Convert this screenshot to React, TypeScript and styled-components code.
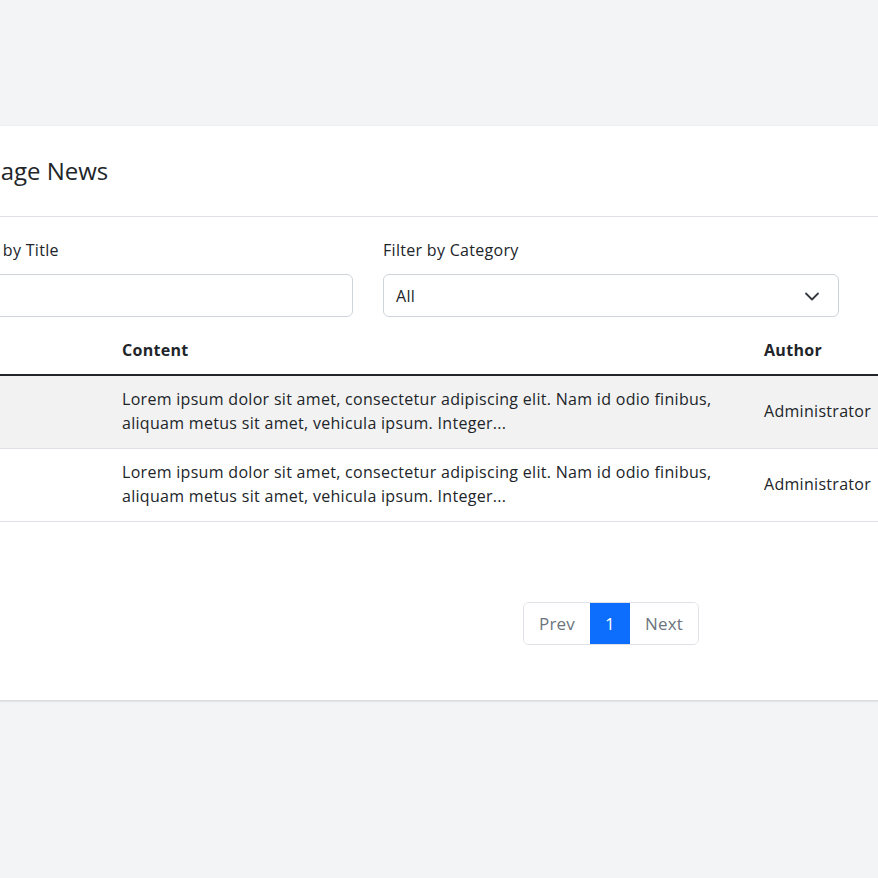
import React from "react";
import styled, { createGlobalStyle } from "styled-components";

const Global = createGlobalStyle`
  html, body {
    margin: 0;
    padding: 0;
    background: #f3f4f6;
    overflow: hidden;
  }
  body {
    font-family: "Open Sans", "Noto Sans", sans-serif;
    color: #212529;
    font-size: 16px;
    line-height: 1.5;
    letter-spacing: 0.3px;
  }
  * { box-sizing: border-box; }
`;

const Page = styled.div`
  padding-top: 126px;
  width: 878px;
  height: 878px;
`;

const Card = styled.section`
  margin-left: -65px;
  width: 1352px;
  background: #ffffff;
  box-shadow: 0 1px 3px rgba(0, 0, 0, 0.1), 0 1px 2px rgba(0, 0, 0, 0.06);
`;

const CardHeader = styled.header`
  height: 91px;
  padding: 0 16px;
  display: flex;
  align-items: center;
  border-bottom: 1px solid #dee2e6;
`;

const Title = styled.h2`
  margin: 0;
  font-size: 24px;
  font-weight: 500;
  line-height: 1.2;
  letter-spacing: 0;
  color: #212529;
`;

const CardBody = styled.div`
  padding: 21px 24px 55px;
`;

const Filters = styled.div`
  display: grid;
  grid-template-columns: 394px 456px;
  column-gap: 30px;
`;

const Field = styled.div`
  display: flex;
  flex-direction: column;
`;

const Label = styled.label`
  font-size: 16px;
  line-height: 24px;
  margin-bottom: 12px;
`;

const Input = styled.input`
  height: 43px;
  border: 1px solid #ced4da;
  border-radius: 6px;
  padding: 0 12px;
  font: inherit;
  color: #212529;
  background: #fff;
`;

const SelectBox = styled.div`
  height: 43px;
  border: 1px solid #ced4da;
  border-radius: 6px;
  padding: 0 18px 0 12px;
  display: flex;
  align-items: center;
  justify-content: space-between;
  background: #fff;
`;

const Table = styled.table`
  margin-top: 12px;
  width: 100%;
  border-collapse: collapse;
  table-layout: fixed;
`;

const Th = styled.th`
  text-align: left;
  font-weight: 700;
  padding: 9px 8px 12px;
  line-height: 24px;
  border-bottom: 2px solid #212529;
`;

const Row = styled.tr<{ $striped?: boolean }>`
  background: ${(p) => (p.$striped ? "#f2f2f2" : "#ffffff")};
`;

const Td = styled.td`
  padding: 11px 8px 13px;
  line-height: 24px;
  vertical-align: middle;
  border-bottom: 1px solid #dee2e6;
`;

const PagerWrap = styled.div`
  margin-top: 80px;
  display: flex;
  justify-content: center;
`;

const Pager = styled.ul`
  list-style: none;
  margin: 0;
  padding: 0;
  display: flex;
  border: 1px solid #dee2e6;
  border-radius: 6px;
  overflow: hidden;
`;

const PageItem = styled.li<{ $active?: boolean }>`
  height: 41px;
  padding: 0 15px;
  display: flex;
  align-items: center;
  font-size: 17px;
  letter-spacing: 0.2px;
  color: ${(p) => (p.$active ? "#ffffff" : "#6c757d")};
  background: ${(p) => (p.$active ? "#0d6efd" : "#ffffff")};
`;

const Chevron = () => (
  <svg width="16" height="16" viewBox="0 0 16 16" fill="none">
    <path d="M2 5.5L8 11.5l6-6" stroke="#343a40" strokeWidth="1.8" strokeLinecap="round" strokeLinejoin="round" />
  </svg>
);

const text =
  "Lorem ipsum dolor sit amet, consectetur adipiscing elit. Nam id odio finibus, aliquam metus sit amet, vehicula ipsum. Integer...";

const rows = [
  { id: 1, content: text, author: "Administrator" },
  { id: 2, content: text, author: "Administrator" },
];

export default function App() {
  return (
    <>
      <Global />
      <Page>
        <Card>
          <CardHeader>
            <Title>Manage News</Title>
          </CardHeader>
          <CardBody>
            <Filters>
              <Field>
                <Label>Filter by Title</Label>
                <Input type="text" />
              </Field>
              <Field>
                <Label>Filter by Category</Label>
                <SelectBox>
                  <span>All</span>
                  <Chevron />
                </SelectBox>
              </Field>
            </Filters>
            <Table>
              <colgroup>
                <col style={{ width: 155 }} />
                <col style={{ width: 642 }} />
                <col />
              </colgroup>
              <thead>
                <tr>
                  <Th />
                  <Th>Content</Th>
                  <Th>Author</Th>
                </tr>
              </thead>
              <tbody>
                {rows.map((r, i) => (
                  <Row key={r.id} $striped={i % 2 === 0}>
                    <Td />
                    <Td>{r.content}</Td>
                    <Td>{r.author}</Td>
                  </Row>
                ))}
              </tbody>
            </Table>
            <PagerWrap>
              <Pager>
                <PageItem>Prev</PageItem>
                <PageItem $active>1</PageItem>
                <PageItem>Next</PageItem>
              </Pager>
            </PagerWrap>
          </CardBody>
        </Card>
      </Page>
    </>
  );
}
